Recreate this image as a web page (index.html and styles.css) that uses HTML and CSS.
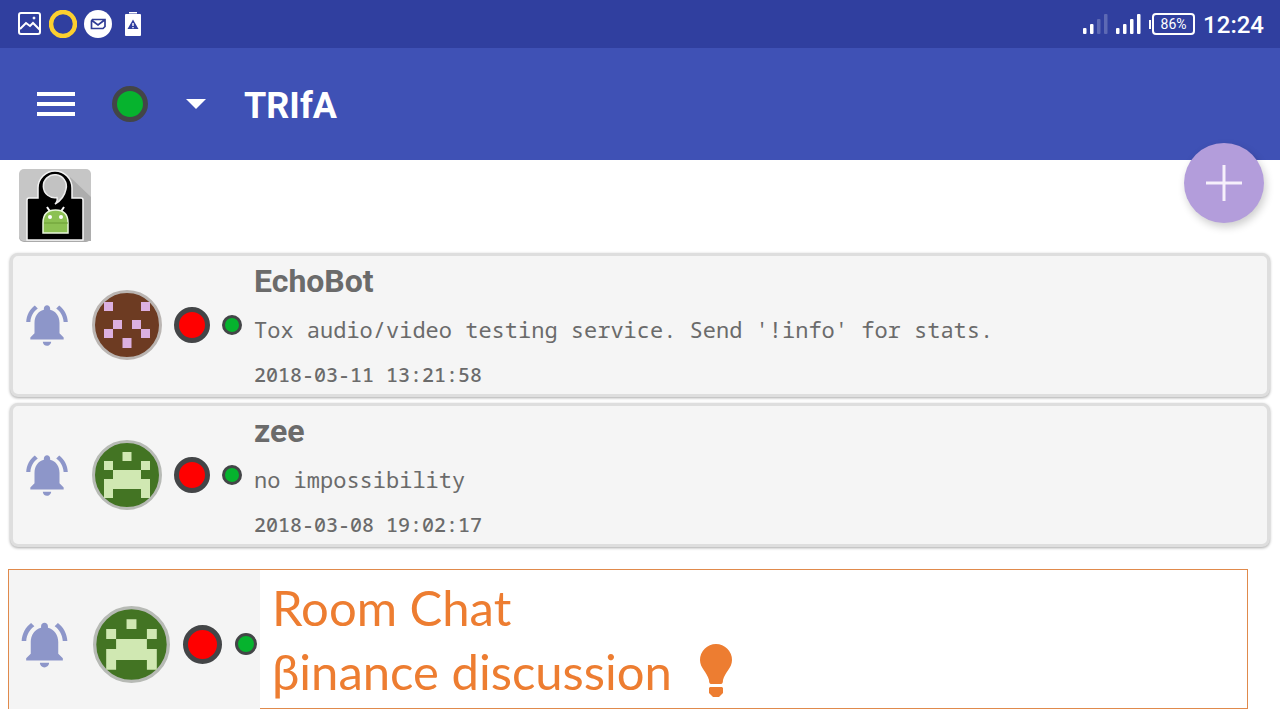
FILE: index.html
```html
<!DOCTYPE html>
<html lang="en">
<head>
  <meta charset="UTF-8">
  <title>TRIfA</title>
  <link rel="stylesheet" href="styles.css">
</head>
<body>
  <!-- shared shapes -->
  <svg class="defs" aria-hidden="true">
    <symbol id="bell" viewBox="0 0 24 24">
      <path d="M7.58 4.08L6.15 2.65C3.75 4.48 2.17 7.3 2.03 10.5h2c.15-2.65 1.51-4.97 3.55-6.42zm12.39 6.42h2c-.15-3.2-1.73-6.02-4.12-7.85l-1.42 1.43c2.02 1.45 3.39 3.77 3.54 6.42zM18 11c0-3.07-1.64-5.64-4.5-6.32V4c0-.83-.67-1.5-1.5-1.5s-1.5.67-1.5 1.5v.68C7.63 5.36 6 7.92 6 11v5l-2 2v1h16v-1l-2-2v-5zm-6 11c.14 0 .27-.01.4-.04.65-.14 1.18-.58 1.44-1.18.1-.24.15-.5.15-.78h-4c.01 1.1.9 2 2.01 2z"/>
    </symbol>
    <symbol id="avatar-brown" viewBox="0 0 70 70">
      <circle cx="35" cy="35" r="33.5" fill="#6d3b22" stroke="#bab5b2" stroke-width="3"/>
      <path fill="#dcb0e0" d="M12 12h9v9h-9zM49 12h9v9h-9zM21 30h9v9h-9zM40 30h9v9h-9zM12 39h9v9h-9zM49 39h9v9h-9zM30.500 48h9v10h-9z"/>
    </symbol>
    <symbol id="avatar-green" viewBox="0 0 70 70">
      <circle cx="35" cy="35" r="33.5" fill="#437423" stroke="#b7bab5" stroke-width="3"/>
      <path fill="#d0e8b2" d="M30.500 12h9v9h-9zM12 21h9v9h-9zM49 21h9v9h-9zM21 30h28v9h9v19h-9v-9H21v9h-9V39h9z"/>
    </symbol>
  </svg>

  <div class="status-bar">
    <svg width="24" height="24" viewBox="0 0 24 24" fill="none" stroke="#fff" stroke-width="2">
      <rect x="1" y="1" width="21" height="21" rx="2"/>
      <path d="M2 17l6-6 4 3 3-3 7 7"/>
      <circle cx="16" cy="6" r="1" fill="#fff" stroke-width="1"/>
    </svg>
    <svg width="28" height="28" viewBox="0 0 28 28">
      <circle cx="14" cy="14" r="12" fill="none" stroke="#fccf2f" stroke-width="4.500"/>
    </svg>
    <svg width="28" height="28" viewBox="0 0 28 28">
      <circle cx="14" cy="14" r="14" fill="#fff"/>
      <path d="M8.500 9.500h12.500v7l-2 2H7.500v-7.500zM8 10.500l6 4.500 6.500-5" fill="none" stroke="#2f3c95" stroke-width="1.700"/>
    </svg>
    <svg class="battery-alert" width="16" height="24" viewBox="0 0 16 24">
      <path d="M4 0h8v1.500H4zM1 2h14q1 0 1 1v20q0 1-1 1H1q-1 0-1-1V3q0-1 1-1z" fill="#fff"/>
      <path d="M8 7.500L13.500 17h-11z" fill="#303f9f"/>
      <path d="M7.300 11h1.400v3H7.300zM7.300 15h1.400v1.200H7.300z" fill="#fff"/>
    </svg>
    <div class="status-right">
      <svg width="25" height="20" viewBox="0 0 25 20" fill="#fff">
        <rect x="0" y="14" width="3.500" height="6" rx="1"/><rect x="7" y="10" width="3.500" height="10" rx="1"/>
        <rect x="14" y="5" width="3.500" height="15" rx="1" opacity=".22"/><rect x="21" y="0" width="3.500" height="20" rx="1" opacity=".22"/>
      </svg>
      <svg width="25" height="20" viewBox="0 0 25 20" fill="#fff">
        <rect x="0" y="14" width="3.500" height="6" rx="1"/><rect x="7" y="10" width="3.500" height="10" rx="1"/>
        <rect x="14" y="5" width="3.500" height="15" rx="1"/><rect x="21" y="0" width="3.500" height="20" rx="1"/>
      </svg>
      <div class="battery">
        <span class="battery-tip"></span>
        <span class="battery-level">86%</span>
      </div>
      <span class="clock">12:24</span>
    </div>
  </div>

  <header class="toolbar">
    <button class="menu-btn" aria-label="Menu"><span></span><span></span><span></span></button>
    <span class="dot online"></span>
    <button class="caret-btn" aria-label="Change status">
      <svg width="20" height="10" viewBox="0 0 20 10"><path d="M0 0h20L10 10z" fill="#fff"/></svg>
    </button>
    <h1>TRIfA</h1>
    <button class="fab" aria-label="Add friend">
      <svg width="36" height="36" viewBox="0 0 36 36"><path d="M18 0v36M0 18h36" stroke="#f6f0fb" stroke-width="3"/></svg>
    </button>
  </header>

  <main>
    <svg class="app-icon" width="74" height="75" viewBox="0 0 74 75">
      <rect x="1" y="3" width="72" height="71" rx="5" fill="#aaa"/>
      <rect x="1" y="1" width="72" height="72" rx="5" fill="#c6c6c6"/>
      <path d="M52 9l21 20v44H64V30H53z" fill="#adadad"/>
      <path d="M9 72V32q0-2 2-2h9V20a17 17 0 0 1 34 0v10h9q2 0 2 2v40z" fill="#000" stroke="#f5f5f5" stroke-width="1.500"/>
      <path d="M39 29.500A11.500 11.500 0 1 1 48 21Q46 31 37 36q3-3 2-6.500z" fill="#c2c2c2" stroke="#eee" stroke-width="1.500"/>
      <path d="M29 39l4 6M46 39l-4 6" stroke="#fff" stroke-width="2"/>
      <path d="M25 65V55q0-13 12.500-13T50 55v10z" fill="#8cc152" stroke="#e8f5dc" stroke-width="1.500"/>
      <path d="M26 55h24" stroke="#6a9c35"/>
      <circle cx="32" cy="49" r="2" fill="#fff"/><circle cx="43" cy="49" r="2" fill="#fff"/>
    </svg>

    <ul class="friends">
      <li class="card">
        <svg class="bell"><use href="#bell"/></svg>
        <svg class="avatar"><use href="#avatar-brown"/></svg>
        <span class="dot offline"></span>
        <span class="dot online small"></span>
        <div class="info">
          <h2>EchoBot</h2>
          <p>Tox audio/video testing service. Send '!info' for stats.</p>
          <time>2018-03-11 13:21:58</time>
        </div>
      </li>
      <li class="card">
        <svg class="bell"><use href="#bell"/></svg>
        <svg class="avatar"><use href="#avatar-green"/></svg>
        <span class="dot offline"></span>
        <span class="dot online small"></span>
        <div class="info">
          <h2>zee</h2>
          <p>no impossibility</p>
          <time>2018-03-08 19:02:17</time>
        </div>
      </li>
    </ul>

    <section class="room">
      <div class="room-icons">
        <svg class="bell"><use href="#bell"/></svg>
        <svg class="avatar"><use href="#avatar-green"/></svg>
        <span class="dot offline"></span>
        <span class="dot online small"></span>
      </div>
      <div class="room-text">
        <div>Room Chat</div>
        <div class="topic">βinance discussion
          <svg width="32" height="54" viewBox="0 0 32 54" fill="#ed7d31">
            <path d="M16 0a16 16 0 0 1 16 16c0 8-7 12-9 20q0 4-2 4H11q-2 0-2-4C7 28 0 24 0 16A16 16 0 0 1 16 0z"/>
            <path d="M10 43h12l1 1v5l-4 4h-6l-4-4v-5z"/>
          </svg>
        </div>
      </div>
    </section>
  </main>
</body>
</html>
```
FILE: styles.css
```css
* {
  box-sizing: border-box;
}

body {
  margin: 0;
  background: #fff;
  font-family: Roboto, sans-serif;
}

h1, h2, p, ul {
  margin: 0;
  padding: 0;
}

svg {
  display: block;
  flex-shrink: 0;
}

button {
  padding: 0;
  border: none;
  background: none;
  cursor: pointer;
}

.defs {
  position: absolute;
  width: 0;
  height: 0;
}

/* status bar */
.status-bar {
  display: flex;
  align-items: center;
  gap: 7px;
  height: 48px;
  padding: 0 16px 0 18px;
  background: #303f9f;
  color: #fff;
}

.battery-alert {
  margin-left: 6px;
}

.status-right {
  display: flex;
  align-items: center;
  gap: 8px;
  margin-left: auto;
}

.battery {
  display: flex;
  align-items: center;
  gap: 1px;
}

.battery-tip {
  width: 2px;
  height: 9px;
  background: #fff;
}

.battery-level {
  width: 43px;
  height: 22px;
  border: 2px solid #fff;
  border-radius: 4px;
  font-size: 14px;
  line-height: 18px;
  text-align: center;
}

.clock {
  padding-top: 2px;
  font-size: 24px;
  font-weight: 500;
}

/* toolbar */
.toolbar {
  position: relative;
  display: flex;
  align-items: center;
  height: 112px;
  padding: 0 37px;
  background: #3f51b5;
}

.toolbar h1 {
  padding-top: 4px;
  margin-left: 38px;
  color: #fff;
  font-size: 36px;
  font-weight: 700;
}

.menu-btn {
  display: flex;
  flex-direction: column;
  gap: 6px;
  width: 38px;
  margin-right: 37px;
}

.menu-btn span {
  width: 100%;
  height: 4px;
  background: #fff;
}

.caret-btn {
  margin-left: 38px;
}

.fab {
  position: absolute;
  right: 16px;
  bottom: -63px;
  display: flex;
  align-items: center;
  justify-content: center;
  width: 80px;
  height: 80px;
  border-radius: 50%;
  background: #b39ddb;
  box-shadow: 2px 4px 8px rgba(0, 0, 0, 0.2);
}

.dot {
  flex-shrink: 0;
  width: 36px;
  height: 36px;
  border: 5px solid #434547;
  border-radius: 50%;
}

.online {
  background: #06b32e;
}

.offline {
  background: #f00;
}

.small {
  width: 20px;
  height: 20px;
  border-width: 3px;
}

/* friend list */
.app-icon {
  margin: 8px 18px 0;
}

.friends {
  display: flex;
  flex-direction: column;
  gap: 6px;
  padding: 10px 10px 0;
  list-style: none;
}

.card {
  display: flex;
  align-items: center;
  gap: 12px;
  padding-left: 9px;
  border: 3px solid #dedede;
  border-radius: 8px;
  background: #f5f5f5;
  box-shadow: 0 1px 3px rgba(0, 0, 0, 0.35);
}

.bell {
  width: 50px;
  height: 50px;
  margin-right: 8px;
  fill: #8d96c9;
}

.avatar {
  width: 70px;
  height: 70px;
}

.info {
  padding-top: 1px;
  color: #6b6b6b;
}

.info h2 {
  font-size: 32px;
  line-height: 48px;
}

.info p {
  font-family: "Noto Sans Mono", "DejaVu Sans Mono", monospace;
  font-size: 22px;
  line-height: 48px;
}

.info time {
  display: block;
  padding-top: 3px;
  font-family: "Noto Sans Mono", "DejaVu Sans Mono", monospace;
  font-size: 20px;
  font-weight: 500;
  line-height: 38px;
}

/* group chat room */
.room {
  display: flex;
  margin: 22px 32px 0 8px;
  border: 1px solid #e08a4c;
}

.room-icons {
  display: flex;
  align-items: center;
  gap: 13px;
  width: 251px;
  height: 143px;
  margin-bottom: -5px;
  padding: 5px 0 0 8px;
  background: #f4f4f4;
}

.room-icons .bell {
  width: 55px;
  height: 55px;
}

.room-icons .avatar {
  width: 77px;
  height: 77px;
}

.room-icons .offline {
  width: 39px;
  height: 39px;
}

.room-icons .small {
  width: 22px;
  height: 22px;
}

.room-text {
  padding: 5px 12px;
  color: #ed7d31;
  font-family: Lato, sans-serif;
  font-size: 49px;
  line-height: 64px;
}

.topic {
  display: flex;
  align-items: center;
  gap: 28px;
}
```
